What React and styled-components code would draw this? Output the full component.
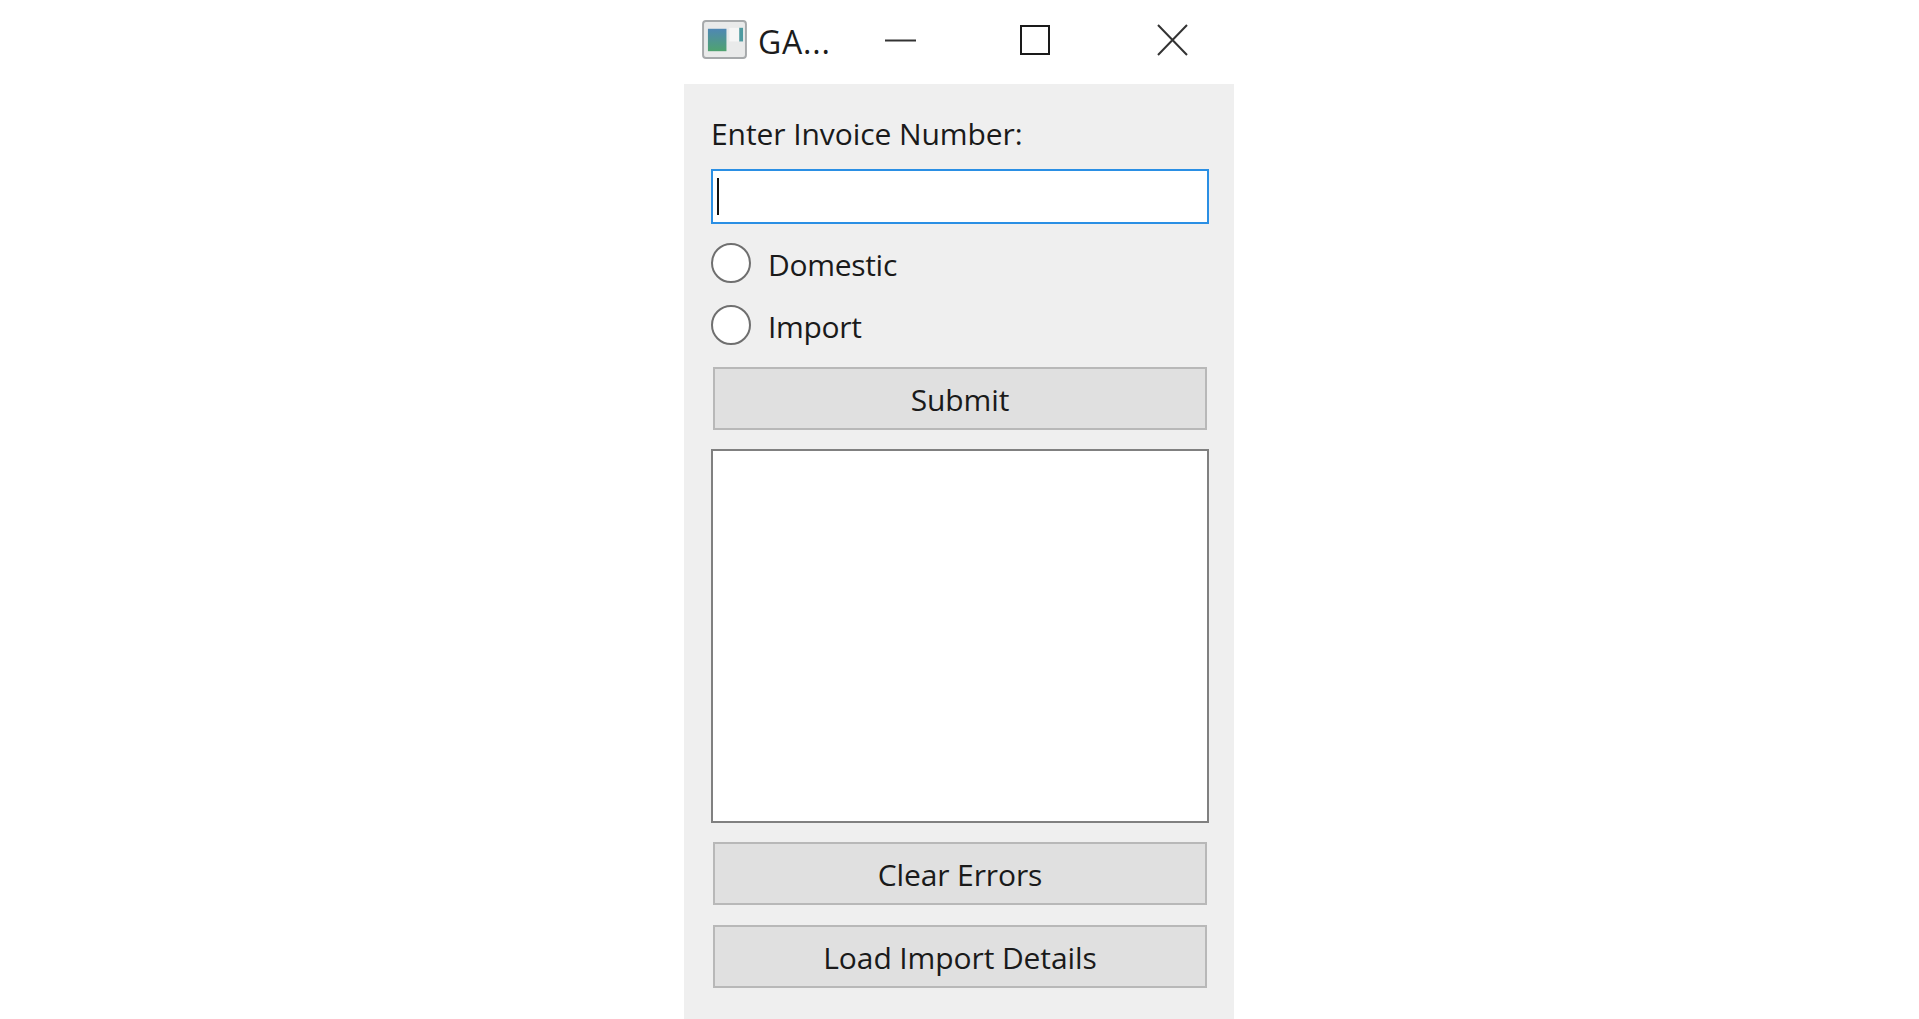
import React from "react";
import styled, { createGlobalStyle } from "styled-components";

const Global = createGlobalStyle`
  html, body { margin: 0; padding: 0; background: #fff; }
  body { font-family: "Open Sans", "Noto Sans", "Liberation Sans", sans-serif; color: #1a1a1a; }
`;
const Page = styled.div`
  width: 100%;
  height: 1019px;
  display: flex;
  justify-content: center;
  padding-right: 1px;
  box-sizing: border-box;
  overflow: hidden;
`;
const Win = styled.div`
  width: 550px;
  display: flex;
  flex-direction: column;
`;
const TitleBar = styled.header`
  height: 84px;
  display: flex;
  align-items: center;
  padding: 0 0 2px 18px;
  box-sizing: border-box;
`;
const AppIcon = styled.svg`
  width: 45px;
  height: 39px;
  flex: none;
  margin-top: -4px;
`;
const Title = styled.span`
  font-size: 32px;
  margin-left: 11px;
  width: 80px;
  flex: none;
  letter-spacing: 0.8px;
  color: #1c1c1c;
`;
const WinButton = styled.button`
  border: 0;
  background: none;
  padding: 0;
  display: flex;
  margin-left: ${(p) => p.$gap}px;
  width: ${(p) => p.$w}px;
  height: 34px;
  flex: none;
  margin-top: -2px;
`;
const Body = styled.main`
  flex: 1;
  background: #efefef;
  padding: 0 25px 0 27px;
  display: flex;
  flex-direction: column;
`;
const Label = styled.label`
  font-size: 30px;
  line-height: 40px;
  margin-top: 30px;
  height: 55px;
  letter-spacing: -0.08px;
`;
const Field = styled.div`
  height: 55px;
  box-sizing: border-box;
  background: #fff;
  border: 2px solid #2a8fe4;
  display: flex;
  align-items: center;
  padding-left: 4px;
`;
const Caret = styled.span`
  width: 2px;
  height: 37px;
  background: #111;
`;
const RadioRow = styled.label`
  display: flex;
  align-items: center;
  height: 40px;
  margin-top: ${(p) => p.$top}px;
  font-size: 30px;
  letter-spacing: -0.3px;
`;
const RadioDot = styled.span`
  width: 40px;
  height: 40px;
  box-sizing: border-box;
  border-radius: 50%;
  background: #fff;
  border: 2px solid #6f6f6f;
  margin-right: 17px;
  flex: none;
`;
const RadioText = styled.span`
  position: relative;
  top: 1px;
`;
const Btn = styled.button`
  display: block;
  width: 494px;
  height: 63px;
  margin: ${(p) => p.$top}px 0 0 2px;
  background: #e0e0e0;
  border: 2px solid #b8b8b8;
  box-sizing: border-box;
  font: inherit;
  font-size: 30px;
  letter-spacing: -0.1px;
  color: #1a1a1a;
  padding: 2px 0 0;
`;
const Output = styled.div`
  height: 374px;
  margin-top: 19px;
  box-sizing: border-box;
  background: #fff;
  border: 2px solid #808080;
`;

export default function App() {
  return (
    <Page>
      <Global />
      <Win>
        <TitleBar>
          <AppIcon viewBox="0 0 46 40">
            <defs>
              <linearGradient id="g" x1="0" y1="0" x2="0" y2="1">
                <stop offset="0" stopColor="#4f87b4" />
                <stop offset="1" stopColor="#4fa36f" />
              </linearGradient>
            </defs>
            <rect x="1" y="1" width="44" height="38" rx="3" fill="#e9eaea" stroke="#a6a9ab" strokeWidth="2" />
            <rect x="6" y="9" width="19" height="23" fill="url(#g)" />
            <rect x="38" y="8" width="4" height="14" fill="#4e9aa0" />
            <rect x="28" y="8" width="10" height="14" fill="#f6f6f6" />
          </AppIcon>
          <Title>GA...</Title>
          <WinButton $gap={47} $w={31} aria-label="Minimize">
            <svg width="31" height="34" viewBox="0 0 31 34"><path d="M0 17.5H31" stroke="#333" strokeWidth="2" /></svg>
          </WinButton>
          <WinButton $gap={104} $w={30} aria-label="Maximize">
            <svg width="30" height="34" viewBox="0 0 30 34"><rect x="1" y="3" width="28" height="28" fill="none" stroke="#1a1a1a" strokeWidth="2" /></svg>
          </WinButton>
          <WinButton $gap={107} $w={31} aria-label="Close">
            <svg width="31" height="34" viewBox="0 0 31 34"><path d="M1 2L30 32M30 2L1 32" stroke="#333" strokeWidth="2" fill="none" /></svg>
          </WinButton>
        </TitleBar>
        <Body>
          <Label>Enter Invoice Number:</Label>
          <Field><Caret /></Field>
          <RadioRow $top={19}><RadioDot /><RadioText>Domestic</RadioText></RadioRow>
          <RadioRow $top={22}><RadioDot /><RadioText>Import</RadioText></RadioRow>
          <Btn $top={22}>Submit</Btn>
          <Output />
          <Btn $top={19}>Clear Errors</Btn>
          <Btn $top={20}>Load Import Details</Btn>
        </Body>
      </Win>
    </Page>
  );
}
